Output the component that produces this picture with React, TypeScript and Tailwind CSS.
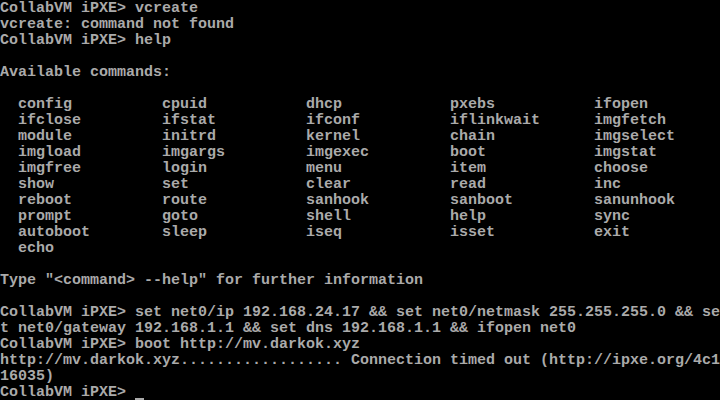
const commands = [
  ["config", "cpuid", "dhcp", "pxebs", "ifopen"],
  ["ifclose", "ifstat", "ifconf", "iflinkwait", "imgfetch"],
  ["module", "initrd", "kernel", "chain", "imgselect"],
  ["imgload", "imgargs", "imgexec", "boot", "imgstat"],
  ["imgfree", "login", "menu", "item", "choose"],
  ["show", "set", "clear", "read", "inc"],
  ["reboot", "route", "sanhook", "sanboot", "sanunhook"],
  ["prompt", "goto", "shell", "help", "sync"],
  ["autoboot", "sleep", "iseq", "isset", "exit"],
  ["echo"],
];

const lines: string[] = [
  "CollabVM iPXE> vcreate",
  "vcreate: command not found",
  "CollabVM iPXE> help",
  "",
  "Available commands:",
  "",
  ...commands.map((row) => "  " + row.map((c) => c.padEnd(16)).join("").trimEnd()),
  "",
  'Type "<command> --help" for further information',
  "",
  "CollabVM iPXE> set net0/ip 192.168.24.17 && set net0/netmask 255.255.255.0 && se",
  "t net0/gateway 192.168.1.1 && set dns 192.168.1.1 && ifopen net0",
  "CollabVM iPXE> boot http://mv.darkok.xyz",
  "http://mv.darkok.xyz.................. Connection timed out (http://ipxe.org/4c1",
  "16035)",
];

export default function App() {
  return (
    <div className="w-[720px] h-[400px] overflow-hidden bg-black text-[#aaaaaa] font-['Liberation_Mono',monospace] font-bold text-[15px] leading-[16px] pt-[1px]">
      {lines.map((line, i) => (
        <div key={i} className="h-[16px] whitespace-pre">
          {line}
        </div>
      ))}
      <div className="h-[16px] whitespace-pre flex">
        <span>CollabVM iPXE&gt; </span>
        <span className="relative inline-block w-[9px] h-[15px]">
          <span className="absolute left-0 right-0 bottom-0 h-[2px] bg-[#aaaaaa]" />
        </span>
      </div>
    </div>
  );
}
